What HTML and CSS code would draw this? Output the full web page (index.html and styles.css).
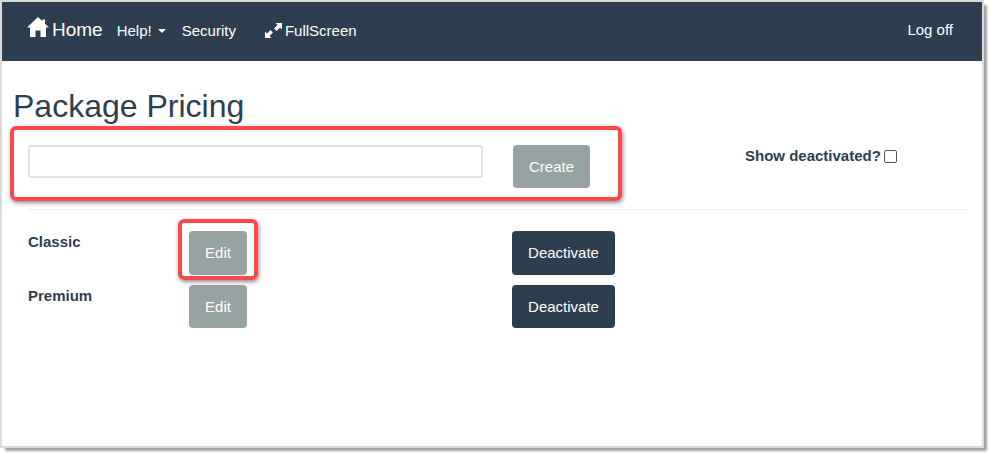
FILE: index.html
```html
<!DOCTYPE html>
<html lang="en">
<head>
<meta charset="utf-8">
<title>Package Pricing</title>
<link rel="stylesheet" href="styles.css">
</head>
<body>
<div class="window">
  <nav class="navbar">
    <a class="brand"><svg class="home-icon" viewBox="0 0 22 20"><path d="M11 0 L15.5 4.3 V2.5 H18 V6.7 L22 10.6 H19 V20 H13.5 V13.5 H8.5 V20 H3 V10.6 H0 Z" fill="#fff"/></svg>Home</a>
    <a class="nav-link help">Help!<span class="caret"></span></a>
    <a class="nav-link security">Security</a>
    <a class="nav-link fullscreen"><svg class="full-icon" viewBox="0 0 17 15"><path d="M10.5 0 H17 V6.5 L15 4.5 L11.5 8 L9 5.5 L12.5 2 Z M0 15 V8.5 L2 10.5 L5.5 7 L8 9.5 L4.5 13 L6.5 15 Z" fill="#fff"/></svg>FullScreen</a>
    <a class="nav-link logoff">Log off</a>
  </nav>
  <main class="content">
    <h1 class="title">Package Pricing</h1>
    <div class="create-row">
      <input class="name-input" type="text" aria-label="Name">
      <button class="btn btn-default create">Create</button>
      <label class="show-label">Show deactivated?<input class="check" type="checkbox"></label>
    </div>
    <hr class="rule">
    <div class="package-row">
      <strong class="package-name">Classic</strong>
      <button class="btn btn-default edit">Edit</button>
      <button class="btn btn-primary">Deactivate</button>
    </div>
    <div class="package-row">
      <strong class="package-name">Premium</strong>
      <button class="btn btn-default edit">Edit</button>
      <button class="btn btn-primary">Deactivate</button>
    </div>
  </main>
  <div class="callout callout-form"></div>
  <div class="callout callout-edit"></div>
</div>
</body>
</html>
```
FILE: styles.css
```css
* { box-sizing: border-box; }
html, body { margin: 0; padding: 0; background: #fff; }
body {
  width: 994px;
  height: 458px;
  overflow: hidden;
  font-family: "Liberation Sans", Arial, sans-serif;
  color: #2c3e50;
}
.window {
  position: relative;
  width: 984px;
  height: 448px;
  background: #fff;
  border: 2px solid #dadada;
  box-shadow: 4px 4px 2px -1px #a2a2a2;
}
.navbar {
  display: flex;
  align-items: center;
  height: 59px;
  background: #2c3e50;
  color: #fff;
  font-size: 15px;
  padding-left: 25px;
}
.brand {
  display: flex;
  align-items: center;
  font-size: 19px;
  margin-top: -4px;
}
.home-icon { width: 22px; height: 20px; margin-right: 3px; margin-top: -5px; }
.nav-link { display: flex; align-items: center; }
.help { margin-left: 14px; margin-top: -3px; }
.caret {
  width: 0;
  height: 0;
  margin-left: 6px;
  margin-top: 2px;
  border-top: 4px solid #fff;
  border-left: 4px solid transparent;
  border-right: 4px solid transparent;
}
.security { margin-left: 16px; margin-top: -3px; }
.fullscreen { margin-left: 29px; margin-top: -3px; }
.full-icon { width: 17px; height: 15px; margin-right: 3px; }
.logoff { margin-left: auto; margin-right: 29px; margin-top: -5px; }
.content { padding: 0 14px 0 11px; }
.title {
  margin: 29px 0 0;
  font-size: 32px;
  font-weight: 400;
  line-height: 33px;
}
.create-row {
  display: flex;
  align-items: flex-start;
  padding: 22px 0 0 15px;
  height: 86px;
}
.name-input {
  width: 455px;
  height: 33px;
  border: 2px solid #dce4ec;
  border-radius: 3px;
  background: #fff;
}
.btn {
  border: 0;
  border-radius: 4px;
  color: #fff;
  font-family: inherit;
  font-size: 15px;
  line-height: 21px;
  padding: 11px 0 11.4px;
  height: 43.4px;
}
.btn-default { background: #97a3a2; }
.btn-primary { background: #2c3e50; width: 103px; }
.create { width: 77px; height: 43px; margin-left: 30px; padding: 11px 0; }
.show-label {
  display: flex;
  align-items: center;
  margin: 1px 0 0 155px;
  font-size: 15px;
  font-weight: 700;
  line-height: 20px;
}
.check {
  appearance: none;
  width: 13px;
  height: 13px;
  margin: 0 0 0 3px;
  border: 1px solid #555;
  border-radius: 2px;
  background: #fff;
}
.rule {
  margin: 0 0 21.4px 15px;
  border: 0;
  border-top: 1px solid #ecf0f1;
  width: 940px;
}
.package-row {
  display: grid;
  grid-template-columns: 161px 323px 103px;
  align-items: start;
  margin: 0 0 10.2px 15px;
}
.package-name {
  font-size: 15px;
  line-height: 20px;
  margin-top: 1px;
}
.edit { width: 58px; }
.callout {
  position: absolute;
  border: 4px solid #fd474a;
  border-radius: 6px;
  box-shadow: 1px 2px 4px rgba(0, 0, 0, 0.45);
}
.callout-form { left: 8px; top: 124px; width: 612px; height: 75px; }
.callout-edit { left: 176px; top: 217px; width: 80px; height: 61px; }
```
